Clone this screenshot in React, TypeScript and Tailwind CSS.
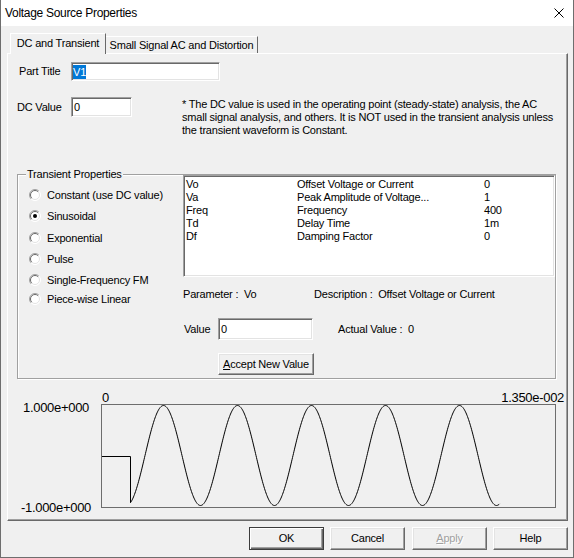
import React from "react";

const ox = 102;
const oy = 405;
function buildWave(): string {
  let d = `M0 51.5 L28.5 51.5 L28.5 ${(455.5 + 47.2 - oy).toFixed(2)}`;
  for (let x = 130; x <= 499; x += 0.5) {
    const y = 455.5 - 50 * Math.sin((2 * Math.PI * (x - 144.5)) / 74);
    d += ` L${(x - ox + 0.5).toFixed(2)} ${(y - oy).toFixed(2)}`;
  }
  return d;
}
const wavePath = buildWave();

const sunken =
  "bg-white border border-t-[#a0a0a0] border-l-[#a0a0a0] border-r-white border-b-white shadow-[inset_1px_1px_0_#696969,inset_-1px_-1px_0_#e3e3e3]";
const raised =
  "bg-[#f0f0f0] border border-t-white border-l-white border-r-[#696969] border-b-[#696969] shadow-[inset_-1px_-1px_0_#a0a0a0,inset_1px_1px_0_#e3e3e3]";

function Radio({ checked }: { checked?: boolean }) {
  return (
    <svg width="12" height="12" viewBox="0 0 12 12" className="shrink-0">
      <circle cx="6" cy="6" r="5.5" fill="white" />
      <path d="M2.1 9.9 A5.5 5.5 0 0 1 9.9 2.1" stroke="#a0a0a0" fill="none" />
      <path d="M9.9 2.1 A5.5 5.5 0 0 1 2.1 9.9" stroke="#ffffff" fill="none" />
      <path d="M2.8 9.2 A4.5 4.5 0 0 1 9.2 2.8" stroke="#696969" fill="none" />
      <path d="M9.2 2.8 A4.5 4.5 0 0 1 2.8 9.2" stroke="#e3e3e3" fill="none" />
      {checked && <circle cx="6" cy="6" r="2" fill="black" />}
    </svg>
  );
}

const radios: { label: string; mt: string; checked?: boolean }[] = [
  { label: "Constant (use DC value)", mt: "mt-[13px]" },
  { label: "Sinusoidal", mt: "mt-[7px]", checked: true },
  { label: "Exponential", mt: "mt-[8px]" },
  { label: "Pulse", mt: "mt-[7px]" },
  { label: "Single-Frequency FM", mt: "mt-[7px]" },
  { label: "Piece-wise Linear", mt: "mt-[5px]" },
];

const params = [
  ["Vo", "Offset Voltage or Current", "0"],
  ["Va", "Peak Amplitude of Voltage...", "1"],
  ["Freq", "Frequency", "400"],
  ["Td", "Delay Time", "1m"],
  ["Df", "Damping Factor", "0"],
];

export default function App() {
  return (
    <div className="w-[574px] h-[558px] bg-[#f0f0f0] border-x border-b border-[#6e6e6e] font-['Liberation_Sans',Arial,sans-serif] text-[11px] leading-[13px] tracking-[-0.2px] text-black overflow-hidden select-none">
      {/* Title bar */}
      <div className="h-[26px] bg-white flex items-center justify-between pl-[4px] pr-[9px]">
        <span className="text-[12px] tracking-[-0.3px]">Voltage Source Properties</span>
        <svg width="10" height="10" viewBox="0 0 10 10">
          <path d="M0.5 0.5 L9.5 9.5 M9.5 0.5 L0.5 9.5" stroke="black" strokeWidth="1" />
        </svg>
      </div>

      <div className="pl-[6px] pt-[7px]">
        {/* Tabs */}
        <div className="flex items-end h-[21px] pl-[3px] relative z-10">
          <div className="h-[21px] w-[96px] bg-[#f0f0f0] border-t border-l border-r border-t-[#ffffff] border-l-[#ffffff] border-r-[#696969] flex items-center justify-center pb-[1px]">
            DC and Transient
          </div>
          <div className="h-[17px] mb-[1px] w-[152px] border-t border-r border-t-[#ffffff] border-r-[#696969] flex items-center justify-center pt-[1px]">
            Small Signal AC and Distortion
          </div>
        </div>

        {/* Panel */}
        <div className="w-[561px] h-[468px] -mt-px border border-t-[#ffffff] border-l-[#ffffff] border-r-[#696969] border-b-[#696969] shadow-[inset_-1px_-1px_0_#a0a0a0] flex flex-col">
          {/* Part title */}
          <div className="mt-[8px] h-[19px] flex items-center">
            <span className="ml-[11px] w-[52px]">Part Title</span>
            <div className={`${sunken} w-[149px] h-[19px] flex items-center pl-[1px]`}>
              <span className="bg-[#0078d7] text-white leading-[14px] inline-block">V1</span>
            </div>
          </div>

          {/* DC value */}
          <div className="mt-[16px] flex items-start">
            <div className="flex items-center h-[20px]">
              <span className="ml-[9px] w-[54px]">DC Value</span>
              <div className={`${sunken} w-[61px] h-[20px] flex items-center pl-[2px]`}>0</div>
            </div>
            <p className="ml-[50px] mt-[1px] leading-[13px] whitespace-nowrap">
              * The DC value is used in the operating point (steady-state) analysis, the AC
              <br />
              small signal analysis, and others. It is NOT used in the transient analysis unless
              <br />
              the transient waveform is Constant.
            </p>
          </div>

          {/* Transient properties group */}
          <div className="mt-[37px] ml-[9px] w-[539px] h-[205px] relative border border-[#a0a0a0] shadow-[inset_1px_1px_0_#ffffff,1px_1px_0_#ffffff] flex">
            <span className="absolute left-[8px] -top-[7px] bg-[#f0f0f0] px-[1px] leading-[13px]">
              Transient Properties
            </span>
            <div className="w-[165px] flex flex-col">
              {radios.map((r) => (
                <div key={r.label} className={`${r.mt} h-[14px] flex items-center pl-[11px] gap-[6px]`}>
                  <Radio checked={r.checked} />
                  <span>{r.label}</span>
                </div>
              ))}
            </div>
            <div className="flex-1 flex flex-col">
              <div className={`${sunken} h-[102px] pt-[2px] pl-[2px]`}>
                {params.map((p) => (
                  <div key={p[0]} className="grid grid-cols-[111px_187px_1fr] leading-[13px]">
                    <span>{p[0]}</span>
                    <span>{p[1]}</span>
                    <span>{p[2]}</span>
                  </div>
                ))}
              </div>
              <div className="mt-[11px] h-[13px] flex whitespace-pre">
                <span className="w-[131px]">Parameter :  Vo</span>
                <span>Description :  Offset Voltage or Current</span>
              </div>
              <div className="mt-[17px] h-[22px] flex items-center">
                <span className="w-[35px] pl-[1px]">Value</span>
                <div className={`${sunken} w-[95px] h-[22px] flex items-center pl-[2px]`}>0</div>
                <span className="ml-[25px] whitespace-pre">Actual Value :  0</span>
              </div>
              <button
                className={`${raised} mt-[13px] ml-[35px] w-[96px] h-[22px] flex items-center justify-center`}
              >
                <span>
                  <span className="underline underline-offset-[1px]">A</span>ccept New Value
                </span>
              </button>
            </div>
          </div>

          {/* Graph */}
          <div className="mt-[12px] h-[124px] flex items-start">
            <div className="w-[93px] h-[124px] pl-[3px] pt-[9px] flex flex-col justify-between items-center text-[13px] leading-[15px] tracking-[-0.3px]">
              <span>1.000e+000</span>
              <span>-1.000e+000</span>
            </div>
            <div className="w-[455px] flex flex-col">
              <div className="h-[13px] flex justify-between items-center text-[13px] leading-[13px] tracking-[-0.3px]">
                <span className="pl-[1px]">0</span>
                <span className="-mr-[8px]">1.350e-002</span>
              </div>
              <div className="h-[104px] border border-[#6d6d6d]">
                <svg width="453" height="102" viewBox="0 0 453 102" className="block overflow-visible">
                  <path d={wavePath} stroke="black" strokeWidth="1" fill="none" strokeLinejoin="round" />
                </svg>
              </div>
            </div>
          </div>
        </div>

        {/* Dialog buttons */}
        <div className="mt-[6px] w-[561px] flex justify-end gap-[6px]">
          <button className="w-[75px] h-[23px] bg-[#f0f0f0] border border-[#3c3c3c] shadow-[inset_1px_1px_0_#ffffff,inset_-1px_-1px_0_#696969,inset_-2px_-2px_0_#a0a0a0] flex items-center justify-center">
            OK
          </button>
          <button className={`${raised} w-[75px] h-[23px] mr-[1px] flex items-center justify-center`}>
            Cancel
          </button>
          <button
            className={`${raised} w-[75px] h-[23px] flex items-center justify-center text-[#a0a0a0] [text-shadow:1px_1px_0_#ffffff]`}
          >
            <span>
              <span className="underline underline-offset-[1px]">A</span>pply
            </span>
          </button>
          <button className={`${raised} w-[75px] h-[23px] flex items-center justify-center`}>Help</button>
        </div>
      </div>
    </div>
  );
}
